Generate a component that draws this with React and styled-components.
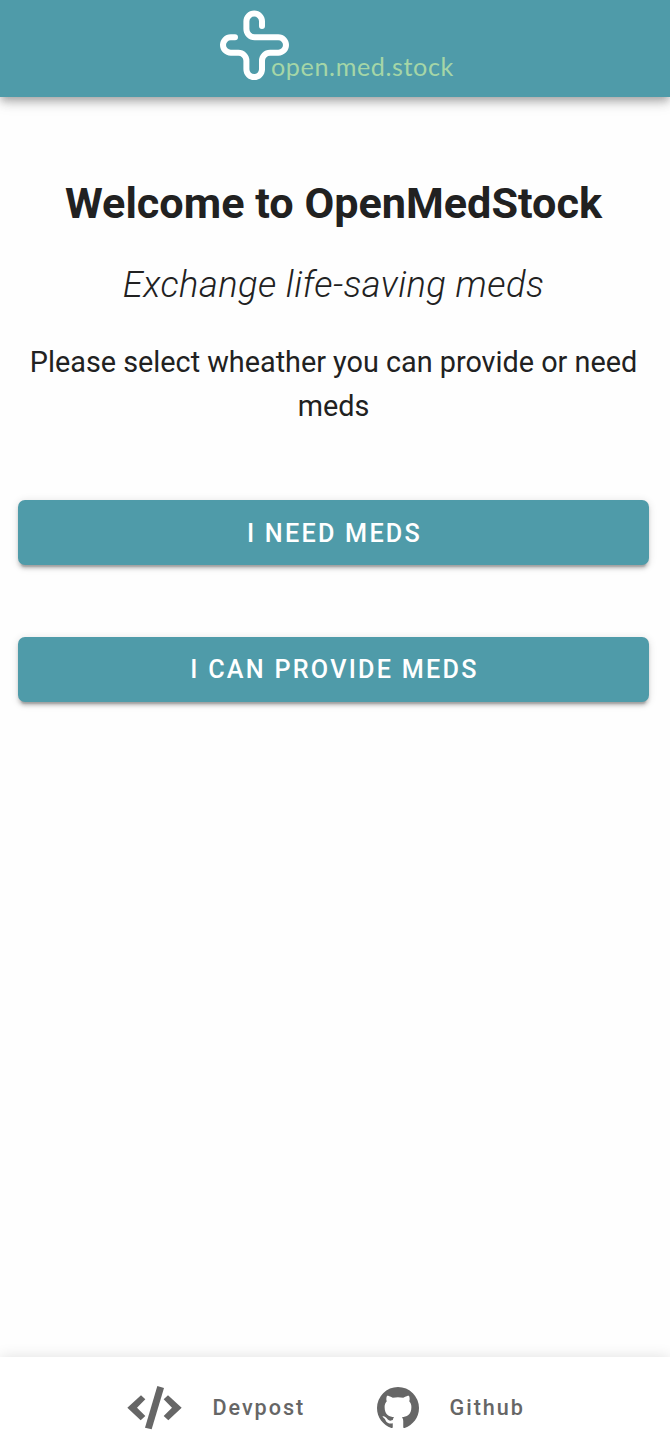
import styled, { createGlobalStyle } from 'styled-components';

const GlobalStyle = createGlobalStyle`
  * {
    box-sizing: border-box;
  }

  body {
    margin: 0;
    background-color: #fefefe;
    color: #212121;
    font-family: Roboto, sans-serif;
  }
`;

const Page = styled.div`
  display: flex;
  flex-direction: column;
  height: 1454px;
  overflow: hidden;
`;

const Header = styled.header`
  display: flex;
  flex: 0 0 97px;
  justify-content: center;
  align-items: flex-start;
  background-color: #4f9ba9;
  box-shadow: 0 3.6px 7.2px -1.8px rgba(0, 0, 0, 0.2),
    0 7.2px 9px 0 rgba(0, 0, 0, 0.14),
    0 1.8px 18px 0 rgba(0, 0, 0, 0.12);
`;

const Main = styled.main`
  display: flex;
  flex-direction: column;
  flex: 1;
  padding: 78px 21px 0 18px;
  text-align: center;
`;

const Title = styled.h1`
  margin: 0;
  font-size: 43.2px;
  font-weight: 700;
  line-height: 58px;
`;

const Subtitle = styled.h2`
  margin: 23px 0 0;
  font-size: 36.3px;
  font-style: italic;
  font-weight: 300;
  line-height: 58px;
  letter-spacing: 0.45px;
`;

const Text = styled.p`
  margin: 26px 0 0;
  font-size: 28.8px;
  line-height: 44px;
`;

const Actions = styled.div`
  display: flex;
  flex-direction: column;
  gap: 72px;
  margin-top: 72px;
`;

const Button = styled.button`
  height: 65px;
  padding: ${({ $offset }) => $offset || 0}px 0 0 2px;
  border: none;
  border-radius: 7px;
  background-color: #4f9ba9;
  color: white;
  font-family: inherit;
  font-size: 25.2px;
  font-weight: 500;
  letter-spacing: 2.25px;
  text-transform: uppercase;
  box-shadow: 0 5.4px 1.8px -3.6px rgba(0, 0, 0, 0.2),
    0 3.6px 3.6px 0 rgba(0, 0, 0, 0.14),
    0 1.8px 9px 0 rgba(0, 0, 0, 0.12);
`;

const Footer = styled.footer`
  display: flex;
  flex: 0 0 97px;
  align-items: center;
  padding: 4px 0 0 127px;
  gap: 72px;
  background-color: white;
  box-shadow: 0 0 14px rgba(0, 0, 0, 0.12);
`;

const FooterLink = styled.a`
  display: flex;
  align-items: center;
  gap: 30.5px;
  color: #666666;
  font-size: 21.6px;
  font-weight: 500;
  letter-spacing: 1.95px;
`;

const Logo = () => (
  <svg width="250" height="97" viewBox="0 0 250 97">
    <path
      d="M52 26V21.3a7.8 7.8 0 0 0-15.6 0V29a8.3 8.3 0 0 0 8.3 8.3H68.3a7.7 7.7 0 0 1 0 15.4H60a8 8 0 0 0-8 8V69.3a7.8 7.8 0 0 1-15.6 0V60.7a8 8 0 0 0-8-8H20.7a7.7 7.7 0 0 1 0-15.4H25"
      fill="none"
      stroke="white"
      strokeWidth="6"
      strokeLinecap="round"
    />
    <text
      x="61"
      y="75.5"
      fill="#a5d6a7"
      fontFamily="Lato, sans-serif"
      fontSize="24.5"
      letterSpacing="0.6"
      textLength="183"
      lengthAdjust="spacingAndGlyphs"
    >
      open.med.stock
    </text>
  </svg>
)

const CodeIcon = () => (
  <svg width="55" height="44" viewBox="0 0 165 132" fill="currentColor">
    <path d="M1 65 42 28 55 40 30 65 55 90 41 103Z" />
    <path d="M91 0 111 6 74 130 54 125Z" />
    <path d="M123 28 164 65 124 103 110 90 135 65 110 40Z" />
  </svg>
)

const GithubIcon = () => (
  <svg width="42" height="42" viewBox="2 2 20 20" fill="currentColor">
    <path d="M12,2A10,10 0 0,0 2,12C2,16.42 4.87,20.17 8.84,21.5C9.34,21.58 9.5,21.27 9.5,21C9.5,20.77 9.5,20.14 9.5,19.31C6.73,19.91 6.14,17.97 6.14,17.97C5.68,16.81 5.03,16.5 5.03,16.5C4.12,15.88 5.1,15.9 5.1,15.9C6.1,15.97 6.63,16.93 6.63,16.93C7.5,18.45 8.97,18 9.54,17.76C9.63,17.11 9.89,16.67 10.17,16.42C7.95,16.17 5.62,15.31 5.62,11.5C5.62,10.39 6,9.5 6.65,8.79C6.55,8.54 6.2,7.5 6.75,6.15C6.75,6.15 7.59,5.88 9.5,7.17C10.29,6.95 11.15,6.84 12,6.84C12.85,6.84 13.71,6.95 14.5,7.17C16.41,5.88 17.25,6.15 17.25,6.15C17.8,7.5 17.45,8.54 17.35,8.79C18,9.5 18.38,10.39 18.38,11.5C18.38,15.32 16.04,16.16 13.81,16.41C14.17,16.72 14.5,17.33 14.5,18.26C14.5,19.6 14.5,20.68 14.5,21C14.5,21.27 14.66,21.59 15.17,21.5C19.14,20.16 22,16.42 22,12A10,10 0 0,0 12,2Z" />
  </svg>
)

export default function App() {
  return (
    <Page>
      <GlobalStyle />
      <Header>
        <Logo />
      </Header>
      <Main>
        <Title>Welcome to OpenMedStock</Title>
        <Subtitle>Exchange life-saving meds</Subtitle>
        <Text>Please select wheather you can provide or need meds</Text>
        <Actions>
          <Button $offset={2}>I need meds</Button>
          <Button>I can provide meds</Button>
        </Actions>
      </Main>
      <Footer>
        <FooterLink>
          <CodeIcon />
          <span>Devpost</span>
        </FooterLink>
        <FooterLink>
          <GithubIcon />
          <span>Github</span>
        </FooterLink>
      </Footer>
    </Page>
  )
}
